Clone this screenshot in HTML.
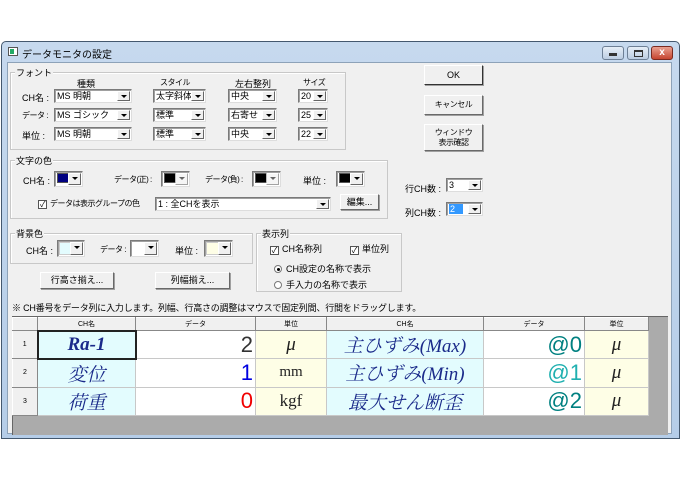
<!DOCTYPE html>
<html><head><meta charset="utf-8"><style>
*{box-sizing:border-box;margin:0;padding:0}
body{width:680px;height:480px;background:#fff;position:relative;overflow:hidden;font-family:"Liberation Sans","Noto Sans CJK JP",sans-serif;font-size:9px;color:#000}
.a{position:absolute}
.win{left:1px;top:41px;width:679px;height:398px;background:linear-gradient(#c6d9ee,#b5cde8);border:1px solid #44586e;border-radius:5px 5px 0 0}
.client{left:7px;top:62px;width:665px;height:372px;background:#f0f0f0;border:1px solid #8da2b8}
.grp{position:absolute;border:1px solid #c8c8c8;box-shadow:inset 1px 1px 0 #fff}
.gl{position:absolute;top:-7px;left:4px;background:#f0f0f0;padding:0 1px;font-size:9px}
.cb{position:absolute;height:14px;background:#fff;border:1px solid #7a7a7a;border-right-color:#ddd;border-bottom-color:#ddd;box-shadow:inset 1px 1px 0 #a0a0a0;font-size:9px;line-height:12px;padding-left:2px;white-space:nowrap;overflow:hidden}
.cb i{position:absolute;right:1px;top:1px;width:13px;height:10px;background:#f0f0f0;border:1px solid;border-color:#fff #666 #666 #fff}
.cb i:after{content:"";position:absolute;left:3px;top:3px;border:3px solid transparent;border-top:3px solid #000;border-bottom:0}
.sw{position:absolute;width:12px;height:10px;left:2px;top:1px;border:1px solid #555}
.btn{position:absolute;background:#f0f0f0;border:1px solid;border-color:#fff #696969 #696969 #fff;box-shadow:1px 1px 0 #a0a0a0;text-align:center;font-size:9px}
.chk{display:inline-block;width:9px;height:9px;border:1px solid #555;background:#fff;vertical-align:-1px;margin-right:3px;font-size:8px;line-height:7px;text-align:center}
.rad{display:inline-block;width:8px;height:8px;border:1px solid #777;border-radius:50%;background:#fff;vertical-align:-1px;margin-right:4px;position:relative}
table{border-collapse:collapse;position:absolute;left:12px;top:317px}
td{border:1px solid #c8c8c8;padding:0;text-align:center;height:28px;font-family:"Liberation Serif","Noto Serif CJK SC",serif;font-size:19px}
th{height:13px;font-weight:normal;font-size:7px;background:#f0f0f0;border:1px solid #888;border-top-color:#fff;border-left-color:#fff}
td.h{background:#f0f0f0;font-size:7px;font-family:"Liberation Sans",sans-serif;border:1px solid #888;border-top-color:#fff;border-left-color:#fff}
.c1{background:#e3fcfe;color:#1a2a8a;font-style:italic}
.d{background:#fff;text-align:right;font-family:"Liberation Sans",sans-serif;font-size:22px;padding-right:2px}
.u{background:#fefee6;color:#222}
.s{font-size:8px;letter-spacing:-0.5px}
</style></head><body>
<div class="a win"></div>
<div class="a" style="left:8px;top:47px;width:10px;height:9px;background:#fff;border:1px solid #555"><div style="margin:1px;width:4px;height:5px;background:#2a6"></div></div>
<div class="a" style="left:22px;top:46px;font-size:10px">データモニタの設定</div>
<div class="a" style="left:602px;top:46px;width:22px;height:14px;border:1px solid #6d7f95;border-radius:3px;background:linear-gradient(#e6eef7,#bccde2)"><div style="margin:6px 6px;width:8px;height:3px;background:#333"></div></div>
<div class="a" style="left:627px;top:46px;width:22px;height:14px;border:1px solid #6d7f95;border-radius:3px;background:linear-gradient(#e6eef7,#bccde2)"><div style="margin:3px 6px;width:9px;height:7px;border:1px solid #333;border-top-width:2px"></div></div>
<div class="a" style="left:651px;top:46px;width:22px;height:14px;border:1px solid #7a2a20;border-radius:3px;background:linear-gradient(#e9a090,#c64530);color:#fff;font-weight:bold;font-size:10px;text-align:center;line-height:12px">x</div>
<div class="a client"></div>

<div class="grp" style="left:10px;top:72px;width:336px;height:78px"><span class="gl">フォント</span></div>
<div class="a" style="left:77px;top:77px">種類</div>
<div class="a s" style="left:160px;top:77px">スタイル</div>
<div class="a" style="left:235px;top:77px">左右整列</div>
<div class="a s" style="left:303px;top:77px">サイズ</div>
<div class="a" style="left:22px;top:91px">CH名 :</div>
<div class="a s" style="left:22px;top:110px">データ :</div>
<div class="a" style="left:22px;top:129px">単位 :</div>
<div class="cb" style="left:54px;top:89px;width:78px">MS 明朝<i></i></div>
<div class="cb" style="left:54px;top:108px;width:78px">MS ゴシック<i></i></div>
<div class="cb" style="left:54px;top:127px;width:78px">MS 明朝<i></i></div>
<div class="cb" style="left:153px;top:89px;width:53px">太字斜体<i></i></div>
<div class="cb" style="left:153px;top:108px;width:53px">標準<i></i></div>
<div class="cb" style="left:153px;top:127px;width:53px">標準<i></i></div>
<div class="cb" style="left:228px;top:89px;width:49px">中央<i></i></div>
<div class="cb" style="left:228px;top:108px;width:49px">右寄せ<i></i></div>
<div class="cb" style="left:228px;top:127px;width:49px">中央<i></i></div>
<div class="cb" style="left:298px;top:89px;width:30px">20<i></i></div>
<div class="cb" style="left:298px;top:108px;width:30px">25<i></i></div>
<div class="cb" style="left:298px;top:127px;width:30px">22<i></i></div>

<div class="grp" style="left:10px;top:160px;width:378px;height:59px"><span class="gl">文字の色</span></div>
<div class="a" style="left:23px;top:174px">CH名 :</div>
<div class="cb" style="left:54px;top:171px;width:29px;height:16px"><span class="sw" style="background:#000080"></span><i style="height:12px"></i></div>
<div class="a s" style="left:114px;top:174px">データ(正) :</div>
<div class="cb" style="left:161px;top:171px;width:29px;height:16px"><span class="sw" style="background:#000"></span><i style="opacity:.6;height:12px"></i></div>
<div class="a s" style="left:205px;top:174px">データ(負) :</div>
<div class="cb" style="left:252px;top:171px;width:29px;height:16px"><span class="sw" style="background:#000"></span><i style="opacity:.6;height:12px"></i></div>
<div class="a" style="left:303px;top:174px">単位 :</div>
<div class="cb" style="left:336px;top:171px;width:29px;height:16px"><span class="sw" style="background:#000"></span><i style="height:12px"></i></div>
<div class="a s" style="left:38px;top:198px"><span class="chk">✓</span>データは表示グループの色</div>
<div class="cb" style="left:155px;top:197px;width:176px">1 : 全CHを表示<i></i></div>
<div class="btn" style="left:340px;top:194px;width:39px;height:16px;line-height:14px">編集...</div>

<div class="grp" style="left:10px;top:233px;width:243px;height:31px"><span class="gl">背景色</span></div>
<div class="a" style="left:26px;top:244px">CH名 :</div>
<div class="cb" style="left:57px;top:240px;width:28px;height:17px"><span class="sw" style="background:#e3fcfe;border-color:#ccc;width:14px;height:13px;left:1px;top:1px"></span><i style="height:13px"></i></div>
<div class="a s" style="left:100px;top:244px">データ :</div>
<div class="cb" style="left:130px;top:240px;width:29px;height:17px"><i style="height:13px"></i></div>
<div class="a" style="left:175px;top:244px">単位 :</div>
<div class="cb" style="left:204px;top:240px;width:29px;height:17px"><span class="sw" style="background:#fefee6;border-color:#ccc;width:14px;height:13px;left:1px;top:1px"></span><i style="height:13px"></i></div>
<div class="btn" style="left:40px;top:272px;width:74px;height:17px;line-height:15px">行高さ揃え...</div>
<div class="btn" style="left:155px;top:272px;width:75px;height:17px;line-height:15px">列幅揃え...</div>

<div class="grp" style="left:256px;top:233px;width:146px;height:59px"><span class="gl">表示列</span></div>
<div class="a" style="left:270px;top:242px"><span class="chk">✓</span>CH名称列</div>
<div class="a" style="left:350px;top:242px"><span class="chk">✓</span>単位列</div>
<div class="a" style="left:274px;top:262px"><span class="rad"><span style="position:absolute;left:2px;top:2px;width:3px;height:3px;border-radius:50%;background:#000"></span></span>CH設定の名称で表示</div>
<div class="a" style="left:274px;top:278px"><span class="rad"></span>手入力の名称で表示</div>
<div class="a" style="left:12px;top:301px;letter-spacing:-0.2px">※ CH番号をデータ列に入力します。列幅、行高さの調整はマウスで固定列間、行間をドラッグします。</div>

<div class="btn" style="left:424px;top:65px;width:59px;height:20px;line-height:18px;border-color:#fff #333 #333 #fff">OK</div>
<div class="btn s" style="left:424px;top:95px;width:59px;height:20px;line-height:18px">キャンセル</div>
<div class="btn s" style="left:424px;top:124px;width:59px;height:27px;line-height:10px;padding-top:3px">ウィンドウ<br>表示確認</div>
<div class="a" style="left:405px;top:182px">行CH数 :</div>
<div class="cb" style="left:446px;top:178px;width:37px">3<i></i></div>
<div class="a" style="left:405px;top:206px">列CH数 :</div>
<div class="cb" style="left:446px;top:202px;width:37px"><span style="background:#3399ff;color:#fff;padding:0 8px 0 1px">2</span><i></i></div>

<div class="a" style="left:12px;top:316px;width:656px;height:119px;background:#ababab;border-left:1px solid #666;border-top:1px solid #666"></div>
<table>
<tr><th style="width:25px"></th><th style="width:98px">CH名</th><th style="width:120px">データ</th><th style="width:71px">単位</th><th style="width:157px">CH名</th><th style="width:101px">データ</th><th style="width:64px">単位</th></tr>
<tr><td class="h">1</td><td class="c1" style="border:2px solid #222;font-weight:bold">Ra-1</td><td class="d" style="color:#333">2</td><td class="u" style="font-style:italic">μ</td><td class="c1">主ひずみ(Max)</td><td class="d" style="color:#008080">@0</td><td class="u" style="font-style:italic">μ</td></tr>
<tr><td class="h">2</td><td class="c1">変位</td><td class="d" style="color:#0000e0">1</td><td class="u" style="font-size:15px">mm</td><td class="c1">主ひずみ(Min)</td><td class="d" style="color:#20b0b0">@1</td><td class="u" style="font-style:italic">μ</td></tr>
<tr><td class="h">3</td><td class="c1">荷重</td><td class="d" style="color:#f00000">0</td><td class="u" style="font-size:17px">kgf</td><td class="c1">最大せん断歪</td><td class="d" style="color:#008080">@2</td><td class="u" style="font-style:italic">μ</td></tr>
</table>
</body></html>
